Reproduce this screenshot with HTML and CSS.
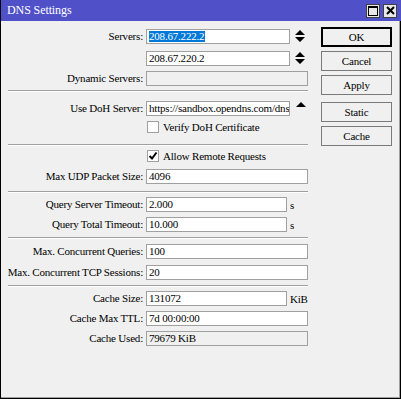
FILE: index.html
```html
<!DOCTYPE html>
<html>
<head>
<meta charset="utf-8">
<link rel="stylesheet" href="styles.css">
</head>
<body>
<div class="window">
  <div class="titlebar">
    <span class="title">DNS Settings</span>
    <div class="tbtns">
      <span class="tb"><span class="maxbox"></span></span>
      <span class="tb">
        <svg width="9" height="9" viewBox="0 0 9 9"><path d="M1 1L8 8M8 1L1 8" stroke="#000" stroke-width="2"/></svg>
      </span>
    </div>
  </div>
  <div class="body">
    <div class="form">
      <div class="section s1">
        <div class="row r22">
          <div class="label">Servers:</div>
          <div class="input w-short"><span class="sel">208.67.222.2</span></div>
          <svg class="updown" width="10" height="12" viewBox="0 0 10 12"><path d="M5 0L10 5H0Z M0 7H10L5 12Z" fill="#000"/></svg>
        </div>
        <div class="row r20">
          <div class="label"></div>
          <div class="input w-short">208.67.220.2</div>
          <svg class="updown" width="10" height="12" viewBox="0 0 10 12"><path d="M5 0L10 5H0Z M0 7H10L5 12Z" fill="#000"/></svg>
        </div>
        <div class="row">
          <div class="label">Dynamic Servers:</div>
          <div class="input w-long disabled"></div>
        </div>
      </div>
      <div class="section s2">
        <div class="row r20">
          <div class="label">Use DoH Server:</div>
          <div class="input w-short">https://sandbox.opendns.com/dns-query</div>
          <svg class="up" width="10" height="6" viewBox="0 0 10 6"><path d="M5 0L10 5H0Z" fill="#000"/></svg>
        </div>
        <div class="row">
          <div class="label"></div>
          <span class="check"></span>
          <span class="cklabel">Verify DoH Certificate</span>
        </div>
      </div>
      <div class="section s3">
        <div class="row r19">
          <div class="label"></div>
          <span class="check"><svg width="10" height="10" viewBox="0 0 10 10"><path d="M1.5 5L4 7.5L8.5 1.5" stroke="#000" stroke-width="2" fill="none"/></svg></span>
          <span class="cklabel">Allow Remote Requests</span>
        </div>
        <div class="row">
          <div class="label">Max UDP Packet Size:</div>
          <div class="input w-long">4096</div>
        </div>
      </div>
      <div class="section s4">
        <div class="row r20">
          <div class="label">Query Server Timeout:</div>
          <div class="input w-unit">2.000</div>
          <span class="unit">s</span>
        </div>
        <div class="row">
          <div class="label">Query Total Timeout:</div>
          <div class="input w-unit">10.000</div>
          <span class="unit">s</span>
        </div>
      </div>
      <div class="section s5">
        <div class="row r21">
          <div class="label">Max. Concurrent Queries:</div>
          <div class="input w-long">100</div>
        </div>
        <div class="row">
          <div class="label">Max. Concurrent TCP Sessions:</div>
          <div class="input w-long">20</div>
        </div>
      </div>
      <div class="section s6 last">
        <div class="row r20">
          <div class="label">Cache Size:</div>
          <div class="input w-unit">131072</div>
          <span class="unit">KiB</span>
        </div>
        <div class="row r20">
          <div class="label">Cache Max TTL:</div>
          <div class="input w-long">7d 00:00:00</div>
        </div>
        <div class="row">
          <div class="label">Cache Used:</div>
          <div class="input w-long disabled">79679 KiB</div>
        </div>
      </div>
    </div>
    <div class="buttons">
      <div class="btn default">OK</div>
      <div class="btn">Cancel</div>
      <div class="btn">Apply</div>
      <div class="btn gap">Static</div>
      <div class="btn">Cache</div>
    </div>
  </div>
</div>
</body>
</html>
```
FILE: styles.css
```css
html, body {
  margin: 0;
  padding: 0;
  background: #f0f0f0;
}
.window {
  box-sizing: border-box;
  width: 401px;
  height: 399px;
  background: #f0f0f0;
  border-left: 1px solid #000;
  border-right: 1px solid #000;
  border-bottom: 1px solid #000;
  box-shadow: inset -1px -1px 0 #a0a0a0;
  font-family: "Liberation Serif", "DejaVu Serif", serif;
  font-size: 11px;
  letter-spacing: -0.2px;
  color: #000;
}
.titlebar {
  height: 21px;
  background: #5050c8;
  display: flex;
  align-items: center;
  justify-content: space-between;
  padding: 0 4px 0 6px;
  margin-right: -1px;
}
.title {
  color: #fff;
  font-size: 12px;
  letter-spacing: -0.1px;
}
.tbtns {
  display: flex;
  gap: 3px;
}
.tb {
  box-sizing: border-box;
  width: 14px;
  height: 14px;
  background: #e8e8e8;
  border: 1px solid #404040;
  display: flex;
  align-items: center;
  justify-content: center;
}
.maxbox {
  box-sizing: border-box;
  width: 10px;
  height: 10px;
  border: 1px solid #000;
  border-top-width: 2px;
}
.body {
  display: flex;
}
.form {
  margin-left: 7px;
  width: 300px;
}
.section {
  border-bottom: 1px solid #a0a0a0;
  box-shadow: 0 1px 0 #fff;
}
.section.last {
  border-bottom: none;
  box-shadow: none;
}
.s1 { padding: 8px 0 4px; }
.s2 { padding: 10px 0 8px; }
.s3 { padding: 5px 0 7px; }
.s4 { padding: 5px 0 5px; }
.s5 { padding: 6px 0 5px; }
.s6 { padding: 5px 0 0; }
.row {
  display: flex;
  align-items: flex-start;
  height: 15px;
}
.r19 { height: 19px; }
.r20 { height: 20px; }
.r21 { height: 21px; }
.r22 { height: 22px; }
.label {
  width: 135px;
  flex: none;
  display: flex;
  justify-content: flex-end;
  white-space: nowrap;
  line-height: 15px;
  margin-right: 3px;
}
.input {
  box-sizing: border-box;
  height: 15px;
  background: #fff;
  border: 1px solid #a0a0a0;
  line-height: 13px;
  padding-left: 2px;
  white-space: nowrap;
  overflow: hidden;
  flex: none;
}
.input.disabled {
  background: #f0f0f0;
}
.w-short { width: 144px; }
.w-long { width: 162px; }
.w-unit { width: 141px; }
.sel {
  background: #0078d7;
  color: #fff;
  display: inline-block;
  line-height: 11px;
  padding-right: 1px;
}
.updown {
  margin-left: 5px;
  margin-top: 1px;
  flex: none;
}
.up {
  margin-left: 6px;
  margin-top: 1px;
  flex: none;
}
.unit {
  margin-left: 3px;
  line-height: 17px;
}
.check {
  box-sizing: border-box;
  width: 12px;
  height: 12px;
  background: #fff;
  border: 1px solid #a0a0a0;
  flex: none;
  display: flex;
  align-items: center;
  justify-content: center;
  margin-left: 1px;
}
.cklabel {
  margin-left: 4px;
  line-height: 12px;
  white-space: nowrap;
}
.buttons {
  margin-left: 13px;
  padding-top: 6px;
  display: flex;
  flex-direction: column;
  gap: 4px;
  width: 71px;
}
.btn {
  box-sizing: border-box;
  height: 20px;
  border: 1px solid #7a7a7a;
  background: #f0f0f0;
  display: flex;
  align-items: center;
  justify-content: center;
}
.btn.default {
  border: 2px solid #000;
}
.btn.gap {
  margin-top: 3px;
}
```
